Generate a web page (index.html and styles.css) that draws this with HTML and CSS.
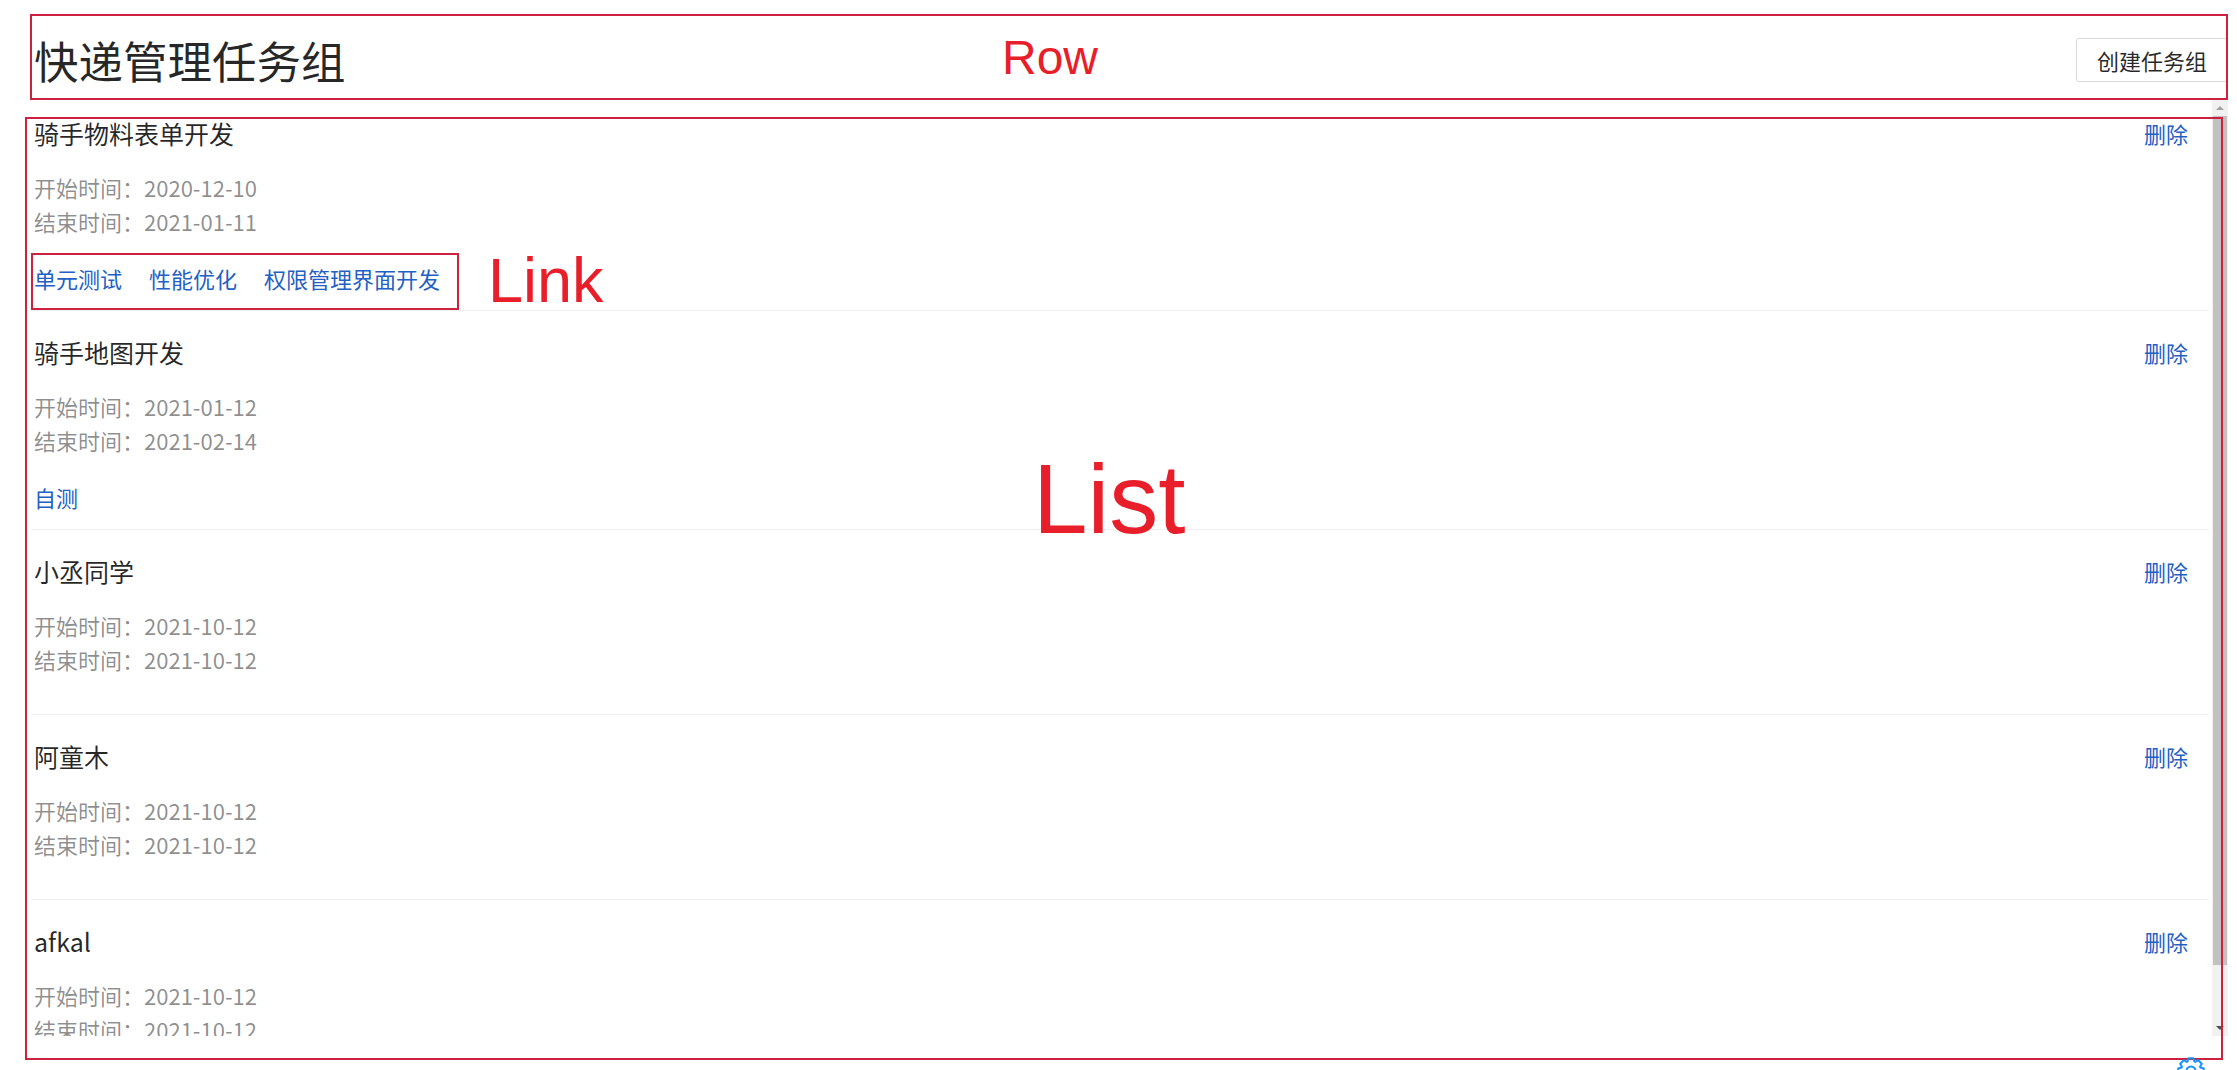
FILE: index.html
```html
<!DOCTYPE html>
<html lang="zh-CN">
<head>
<meta charset="utf-8">
<title>快递管理任务组</title>
<link rel="stylesheet" href="styles.css">
</head>
<body>
<div class="page">
  <header class="row">
    <h1 class="page-title">快递管理任务组</h1>
    <button class="btn" type="button">创建任务组</button>
  </header>
  <div class="list">
    <div class="list-body">
      <div class="item">
        <div class="item-main">
          <div class="item-title">骑手物料表单开发</div>
          <div class="item-desc">
            <div>开始时间：2020-12-10</div>
            <div>结束时间：2021-01-11</div>
          </div>
          <div class="item-links"><a class="link" href="#">单元测试</a><a class="link" href="#">性能优化</a><a class="link" href="#">权限管理界面开发</a></div>
        </div>
        <a class="item-action" href="#">删除</a>
      </div>
      <div class="item">
        <div class="item-main">
          <div class="item-title">骑手地图开发</div>
          <div class="item-desc">
            <div>开始时间：2021-01-12</div>
            <div>结束时间：2021-02-14</div>
          </div>
          <div class="item-links"><a class="link" href="#">自测</a></div>
        </div>
        <a class="item-action" href="#">删除</a>
      </div>
      <div class="item">
        <div class="item-main">
          <div class="item-title">小丞同学</div>
          <div class="item-desc">
            <div>开始时间：2021-10-12</div>
            <div>结束时间：2021-10-12</div>
          </div>
          <div class="item-links"></div>
        </div>
        <a class="item-action" href="#">删除</a>
      </div>
      <div class="item">
        <div class="item-main">
          <div class="item-title">阿童木</div>
          <div class="item-desc">
            <div>开始时间：2021-10-12</div>
            <div>结束时间：2021-10-12</div>
          </div>
          <div class="item-links"></div>
        </div>
        <a class="item-action" href="#">删除</a>
      </div>
      <div class="item">
        <div class="item-main">
          <div class="item-title">afkal</div>
          <div class="item-desc">
            <div>开始时间：2021-10-12</div>
            <div>结束时间：2021-10-12</div>
          </div>
          <div class="item-links"></div>
        </div>
        <a class="item-action" href="#">删除</a>
      </div>
    </div>
    <div class="scrollbar">
      <div class="sb-btn"><span class="arrow-up"></span></div>
      <div class="sb-track"><div class="sb-thumb"></div></div>
      <div class="sb-btn"><span class="arrow-down"></span></div>
    </div>
  </div>
</div>

<div class="anno-box anno-row"></div>
<div class="anno-box anno-list"></div>
<div class="anno-box anno-link"></div>
<div class="anno-text anno-text-row">Row</div>
<div class="anno-text anno-text-link">Link</div>
<div class="anno-text anno-text-list">List</div>

<svg class="gear" width="30" height="30" viewBox="0 0 30 30">
  <polygon fill="none" stroke="#1890ff" stroke-width="2" stroke-linejoin="round"
    points="11.58,5.60 12.52,2.24 17.48,2.24 18.42,5.60 19.23,5.94 22.27,4.22 25.78,7.73 24.06,10.77 24.40,11.58 27.76,12.52 27.76,17.48 24.40,18.42 24.06,19.23 25.78,22.27 22.27,25.78 19.23,24.06 18.42,24.40 17.48,27.76 12.52,27.76 11.58,24.40 10.77,24.06 7.73,25.78 4.22,22.27 5.94,19.23 5.60,18.42 2.24,17.48 2.24,12.52 5.60,11.58 5.94,10.77 4.22,7.73 7.73,4.22 10.77,5.94"/>
  <circle cx="15" cy="15" r="4.5" fill="none" stroke="#1890ff" stroke-width="2"/>
</svg>
</body>
</html>
```

FILE: styles.css
```css
html, body {
  margin: 0;
  padding: 0;
  background: #fff;
}

body {
  position: relative;
  width: 2237px;
  height: 1070px;
  overflow: hidden;
  font-family: "Noto Sans CJK SC", "Noto Sans", sans-serif;
  color: rgba(0, 0, 0, 0.85);
}

.page {
  padding: 30px 9px 0 31px;
}

.row {
  display: flex;
  justify-content: space-between;
  align-items: center;
  height: 60px;
  margin-bottom: 10px;
}

.page-title {
  margin: 0 0 0 3px;
  font-size: 44.5px;
  font-weight: 400;
  line-height: 60px;
  color: rgba(0, 0, 0, 0.85);
}

.btn {
  height: 44px;
  padding: 0 20px;
  font-family: "Noto Sans CJK SC", sans-serif;
  font-size: 22px;
  line-height: 42px;
  color: rgba(0, 0, 0, 0.85);
  background: #fff;
  border: 1px solid #d9d9d9;
  border-radius: 3px;
}

.list {
  display: flex;
  height: 936px;
}

.list-body {
  flex: 1;
  overflow: hidden;
  padding-right: 3px;
}

.item {
  display: flex;
  align-items: flex-start;
  padding: 17px 21px 15px 3px;
  border-bottom: 1px solid #f0f0f0;
}

.item:first-child {
  padding-top: 9px;
}

.item-main {
  flex: 1;
}

.item-title {
  font-size: 25px;
  line-height: 48px;
  color: rgba(0, 0, 0, 0.85);
}

.item-desc {
  margin-top: 13px;
  margin-bottom: 23px;
  font-size: 22px;
  line-height: 34px;
  color: rgba(0, 0, 0, 0.45);
}

.item-links {
  display: flex;
  gap: 27px;
  font-size: 22px;
  line-height: 34px;
}

.link,
.item-action {
  color: #2360c4;
  text-decoration: none;
}

.item-action {
  font-size: 22px;
  line-height: 48px;
}

/* fake classic scrollbar */
.scrollbar {
  display: flex;
  flex-direction: column;
  width: 16px;
  background: #f1f1f1;
}

.sb-btn {
  height: 16px;
  display: flex;
  align-items: center;
  justify-content: center;
}

.arrow-up {
  width: 0;
  height: 0;
  border-left: 4px solid transparent;
  border-right: 4px solid transparent;
  border-bottom: 4px solid #a3a3a3;
}

.arrow-down {
  width: 0;
  height: 0;
  border-left: 4px solid transparent;
  border-right: 4px solid transparent;
  border-top: 4px solid #505050;
}

.sb-track {
  flex: 1;
  padding: 0 1px;
}

.sb-thumb {
  height: 849px;
  background: #c1c1c1;
}

/* annotation overlays */
.anno-box {
  position: absolute;
  box-sizing: border-box;
  border: 2px solid #cc2240;
  pointer-events: none;
}

.anno-row {
  left: 30px;
  top: 14px;
  width: 2198px;
  height: 86px;
}

.anno-list {
  left: 25px;
  top: 117px;
  width: 2198px;
  height: 943px;
}

.anno-link {
  left: 31px;
  top: 253px;
  width: 428px;
  height: 57px;
}

.anno-text {
  position: absolute;
  font-family: "Liberation Sans", Arial, sans-serif;
  line-height: 1;
  color: #e81f2a;
  white-space: nowrap;
}

.anno-text-row {
  left: 1002px;
  top: 34px;
  font-size: 48px;
}

.anno-text-link {
  left: 488px;
  top: 249px;
  font-size: 63px;
}

.anno-text-list {
  left: 1033px;
  top: 450px;
  font-size: 98px;
}

.gear {
  position: absolute;
  left: 2176px;
  top: 1056px;
}
```
